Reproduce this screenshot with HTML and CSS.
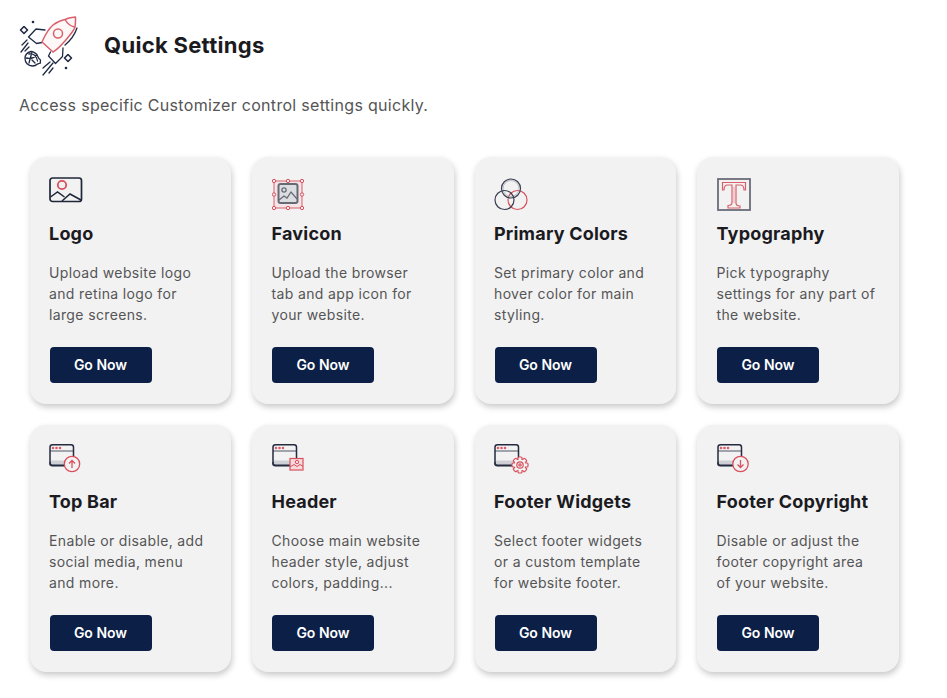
FILE: index.html
```html
<!DOCTYPE html>
<html lang="en">
<head>
<meta charset="utf-8">
<title>Quick Settings</title>
<link rel="stylesheet" href="styles.css">
</head>
<body>
<svg class="defs" width="0" height="0" aria-hidden="true">
  <symbol id="win" viewBox="0 0 35 35">
    <path d="M1.500 16.500h21.500v4.500H1.500z" fill="#cfd0d5"/>
    <path d="M1 7h23.500" fill="none" stroke="#5f6474" stroke-width="1.100"/>
    <path d="M1 18v1.500a2 2 0 0 0 2 2h19" fill="none" stroke="#5f6474" stroke-width="1.800"/>
    <rect x="1" y=".8" width="23.500" height="20.700" rx="2.500" fill="none" stroke="#252b3f" stroke-width="1.500"/>
    <g fill="#dd5f6b"><circle cx="4" cy="4" r="1.300"/><circle cx="7.500" cy="4" r="1.300"/><circle cx="11" cy="4" r="1.300"/></g>
  </symbol>
</svg>
<main class="page">
  <header class="head">
    <svg class="rocket" viewBox="0 0 60 62" width="60" height="62">
      <g fill="none" stroke="#1f2a44" stroke-width="1.300" stroke-linejoin="round" stroke-linecap="round">
        <path d="M26 15l-9-1-7.500 8 8 6.500 5.500-1"/>
        <path d="M44 33l-.5 8.500-7 7-7-7.500 2-4"/>
        <path d="M12 36.500c-4 1-6 4-6 7 0 4 3 7.500 7.500 7.500 2 0 4-1 5-2 1 0 2-1 3-1-.5-1 0-2 0-3-2-1-3-4-4-6-1 0-3-3-5.500-2.500z"/>
        <path d="M10 39c4-1 8 2 8.500 7M13 37l-3 11M7 43c4 1 8 0 11-3M13 45l3 3"/>
        <path d="M2 37l7-9M3 30l5-5M6 36l4-4"/>
        <path d="M24 60l10-12M24 53l7-6M30 58l4-5"/>
        <path d="M58 13c-2 6-6 12-12 17"/>
        <path d="M5 11.500l3.500 3.500-3.500 3.500-3.500-3.500zM49 39.500l3.500 3.500-3.500 3.500-3.500-3.500z" stroke-width="1.600"/>
      </g>
      <g fill="none" stroke="#d9606b" stroke-width="1.500" stroke-linejoin="round">
        <path d="M56.500 2c-4 .5-7.500 1-10.500 2.500C41 5.500 37 7.500 34 10c-4 3.500-8 10-11 17l11 10c5-3 8-6.500 11-10 6-7 10-11 11-15 .5-3 .7-6 .5-10z" fill="#fdf7f7"/>
        <path d="M46 4.500c2 3.500 5 6.500 9.500 7.500"/>
        <circle cx="39" cy="18.500" r="4.500"/>
      </g>
      <circle cx="14" cy="7" r="1.300" fill="#1f2a44"/>
      <circle cx="47" cy="53" r="1.300" fill="#1f2a44"/>
    </svg>
    <h1 class="title">Quick Settings</h1>
  </header>
  <p class="lead">Access specific Customizer control settings quickly.</p>
  <section class="grid">
    <article class="card">
      <svg class="icon" viewBox="0 0 35 35">
        <rect x="1" y="2" width="31.500" height="23.500" rx="2.500" fill="none" stroke="#20263a" stroke-width="1.700"/>
        <circle cx="13" cy="9" r="4.200" fill="none" stroke="#d9505d" stroke-width="1.800"/>
        <path d="M1.500 21l7-5 7 5M13 25l8-7 11 6" fill="none" stroke="#20263a" stroke-width="1.500"/>
      </svg>
      <h2 class="name">Logo</h2>
      <p class="text">Upload website logo and retina logo for large screens.</p>
      <a class="btn">Go Now</a>
    </article>
    <article class="card">
      <svg class="icon" viewBox="0 0 35 35">
        <rect x="2" y="5" width="28" height="27" fill="#f6e4e6" stroke="#d9606b" stroke-width="1"/>
        <rect x="6.500" y="8" width="19" height="19" rx="2" fill="#dcdde0" stroke="#666a75" stroke-width="2"/>
        <circle cx="12" cy="14" r="2.100" fill="none" stroke="#666a75" stroke-width="1.300"/>
        <path d="M7 24l5-4 3 2 4-6 6 7" fill="none" stroke="#666a75" stroke-width="1.300"/>
        <g fill="#f2f2f3" stroke="#d9505d" stroke-width="1">
          <circle cx="2" cy="5" r="1.700"/><circle cx="16" cy="5" r="1.700"/><circle cx="30" cy="5" r="1.700"/>
          <circle cx="2" cy="18.500" r="1.700"/><circle cx="30" cy="18.500" r="1.700"/>
          <circle cx="2" cy="32" r="1.700"/><circle cx="16" cy="32" r="1.700"/><circle cx="30" cy="32" r="1.700"/>
        </g>
      </svg>
      <h2 class="name">Favicon</h2>
      <p class="text">Upload the browser tab and app icon for your website.</p>
      <a class="btn">Go Now</a>
    </article>
    <article class="card">
      <svg class="icon" viewBox="0 0 35 35">
        <g fill="none" stroke-width="1.200">
          <circle cx="23.500" cy="24" r="9.500" stroke="#d9505d"/>
          <circle cx="17" cy="12.500" r="9.500" stroke="#3a3f50"/>
          <circle cx="17" cy="12.500" r="8" stroke="#a0a3ad" stroke-width=".7"/>
          <circle cx="10.500" cy="24" r="9.500" stroke="#3a3f50"/>
        </g>
      </svg>
      <h2 class="name">Primary Colors</h2>
      <p class="text">Set primary color and hover color for main styling.</p>
      <a class="btn">Go Now</a>
    </article>
    <article class="card">
      <svg class="icon" viewBox="0 0 35 35">
        <rect x="1" y="3" width="32" height="31" fill="none" stroke="#6a6d78" stroke-width="1.800"/>
        <path d="M5.500 6.500h23v7.500h-1.500c0-3-1-5-3.500-5H19v18c0 2 1 3 4 3V32H11v-2.500c3 0 4-1 4-3V9h-4.500C8 9 7 11 7 14H5.500z" fill="none" stroke="#d9606b" stroke-width="1.200"/>
        <path d="M17 11v16" stroke="#e59aa1" stroke-width=".8"/>
      </svg>
      <h2 class="name">Typography</h2>
      <p class="text">Pick typography settings for any part of the website.</p>
      <a class="btn">Go Now</a>
    </article>
    <article class="card">
      <svg class="icon" viewBox="0 0 35 35">
        <use href="#win" width="35" height="35"/>
        <circle cx="23" cy="20" r="7.700" fill="#f2f2f3" stroke="#d9505d" stroke-width="1.300"/>
        <path d="M23 24v-7.500M20 19.500l3-3 3 3" fill="none" stroke="#d9505d" stroke-width="1.300"/>
      </svg>
      <h2 class="name">Top Bar</h2>
      <p class="text">Enable or disable, add social media, menu and more.</p>
      <a class="btn">Go Now</a>
    </article>
    <article class="card">
      <svg class="icon" viewBox="0 0 35 35">
        <use href="#win" width="35" height="35"/>
        <rect x="18" y="14.500" width="13" height="11.500" fill="#f6d9dc" stroke="#d9505d" stroke-width="1.200"/>
        <circle cx="25" cy="18" r="1.700" fill="none" stroke="#d9505d"/>
        <path d="M18 23l4-2.500 3 2 3-2 3 2" fill="none" stroke="#d9505d"/>
      </svg>
      <h2 class="name">Header</h2>
      <p class="text">Choose main website header style, adjust colors, padding...</p>
      <a class="btn">Go Now</a>
    </article>
    <article class="card">
      <svg class="icon" viewBox="0 0 35 35">
        <use href="#win" width="35" height="35"/>
        <g fill="#f2f2f3" stroke="#d9505d" stroke-width="1.200">
          <rect x="24" y="13" width="4" height="16" rx="1"/>
          <rect x="24" y="13" width="4" height="16" rx="1" transform="rotate(45 26 21)"/>
          <rect x="24" y="13" width="4" height="16" rx="1" transform="rotate(90 26 21)"/>
          <rect x="24" y="13" width="4" height="16" rx="1" transform="rotate(135 26 21)"/>
          <circle cx="26" cy="21" r="5.500" stroke="none"/>
          <circle cx="26" cy="21" r="3.200"/>
          <circle cx="26" cy="21" r="1.200"/>
        </g>
      </svg>
      <h2 class="name">Footer Widgets</h2>
      <p class="text">Select footer widgets or a custom template for website footer.</p>
      <a class="btn">Go Now</a>
    </article>
    <article class="card">
      <svg class="icon" viewBox="0 0 35 35">
        <use href="#win" width="35" height="35"/>
        <circle cx="23.500" cy="20" r="7.700" fill="#f2f2f3" stroke="#d9505d" stroke-width="1.300"/>
        <path d="M23.500 16v7.500M20.500 20.500l3 3 3-3" fill="none" stroke="#d9505d" stroke-width="1.300"/>
      </svg>
      <h2 class="name">Footer Copyright</h2>
      <p class="text">Disable or adjust the footer copyright area of your website.</p>
      <a class="btn">Go Now</a>
    </article>
  </section>
</main>
</body>
</html>
```
FILE: styles.css
```css
* {
  box-sizing: border-box;
}

html,
body {
  margin: 0;
  background: #fff;
}

body {
  font-family: "Inter", "Liberation Sans", sans-serif;
  color: #555;
}

.defs {
  display: block;
  height: 0;
}

.page {
  width: 947px;
  height: 698px;
  overflow: hidden;
  padding: 15px 0 0 19px;
}

.head {
  display: flex;
  align-items: flex-start;
  gap: 25px;
  height: 62px;
}

.rocket {
  flex: none;
}

.title {
  margin: 15px 0 0;
  font-size: 22px;
  line-height: 30px;
  font-weight: 700;
  letter-spacing: 0.3px;
  color: #1b1b1f;
}

.lead {
  margin: 16px 0 0;
  font-size: 16px;
  line-height: 24px;
  letter-spacing: 0.3px;
  color: #555;
}

.grid {
  display: grid;
  grid-template-columns: repeat(4, 201.5px);
  grid-auto-rows: 247px;
  gap: 21px;
  margin: 40px 0 0 10.500px;
}

.card {
  display: flex;
  flex-direction: column;
  align-items: flex-start;
  padding: 19px 19px 21px 19.500px;
  background: #f2f2f3;
  border-radius: 16px;
  box-shadow: 1px 3px 6px rgba(0, 0, 0, 0.22);
}

.icon {
  display: block;
  width: 35px;
  height: 35px;
  flex: none;
}

.name {
  margin: 9px 0 0;
  font-size: 18px;
  line-height: 27px;
  font-weight: 700;
  letter-spacing: 0.2px;
  color: #1b1b1f;
  white-space: nowrap;
}

.text {
  margin: 15px 0 0;
  font-size: 14px;
  line-height: 21px;
  letter-spacing: 0.36px;
  color: #555;
}

.btn {
  display: flex;
  align-items: center;
  justify-content: center;
  width: 102px;
  height: 36px;
  margin: auto 0 0 0.500px;
  padding-bottom: 2px;
  background: #0b1f47;
  border-radius: 4px;
  font-size: 14px;
  font-weight: 600;
  color: #fff;
}
```
